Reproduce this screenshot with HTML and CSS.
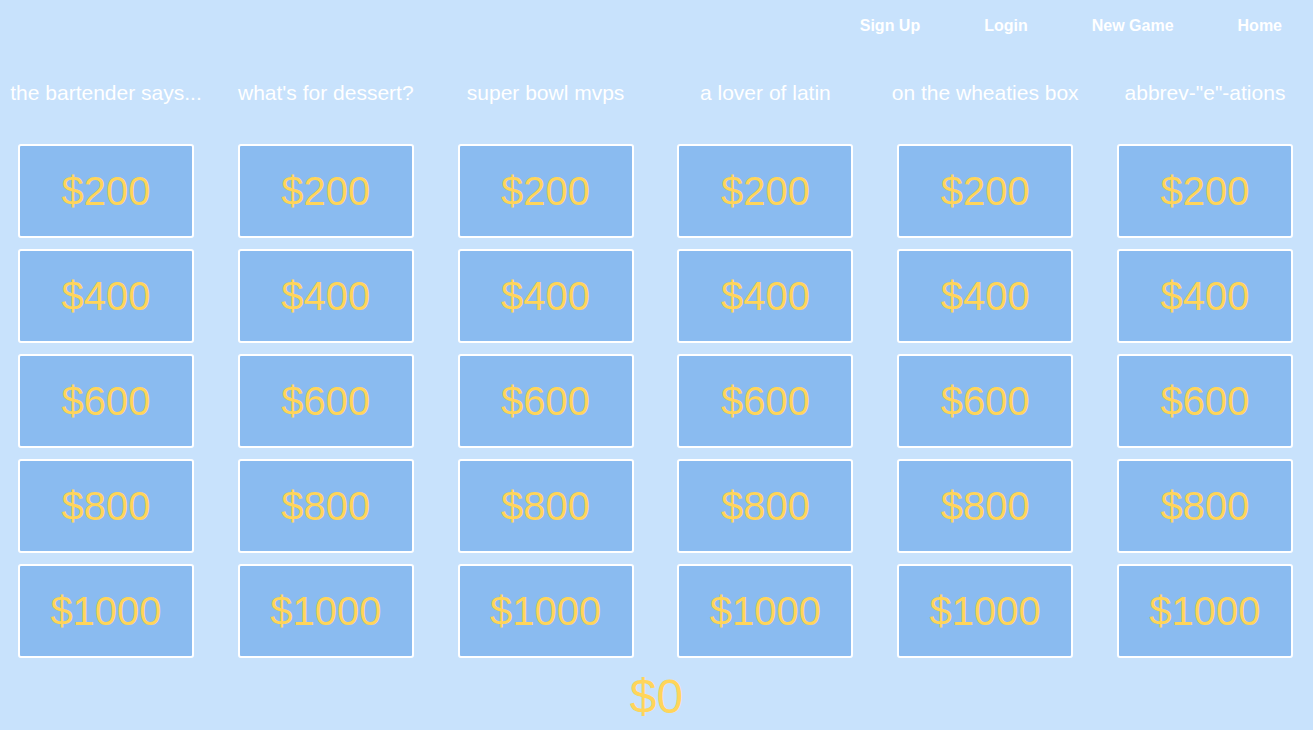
FILE: index.html
```html
<!DOCTYPE html>
<html lang="en">
<head>
<meta charset="utf-8">
<title>Jeopardy</title>
<link rel="stylesheet" href="styles.css">
</head>
<body>
<nav class="nav">
  <a class="nav-link" href="#">Sign Up</a>
  <a class="nav-link" href="#">Login</a>
  <a class="nav-link" href="#">New Game</a>
  <a class="nav-link" href="#">Home</a>
</nav>
<main class="board">
  <section class="category">
    <div class="cat-title"><span>the bartender says...</span></div>
    <div class="clue">$200</div><div class="clue">$400</div><div class="clue">$600</div><div class="clue">$800</div><div class="clue">$1000</div>
  </section>
  <section class="category">
    <div class="cat-title"><span>what's for dessert?</span></div>
    <div class="clue">$200</div><div class="clue">$400</div><div class="clue">$600</div><div class="clue">$800</div><div class="clue">$1000</div>
  </section>
  <section class="category">
    <div class="cat-title"><span>super bowl mvps</span></div>
    <div class="clue">$200</div><div class="clue">$400</div><div class="clue">$600</div><div class="clue">$800</div><div class="clue">$1000</div>
  </section>
  <section class="category">
    <div class="cat-title"><span>a lover of latin</span></div>
    <div class="clue">$200</div><div class="clue">$400</div><div class="clue">$600</div><div class="clue">$800</div><div class="clue">$1000</div>
  </section>
  <section class="category">
    <div class="cat-title"><span>on the wheaties box</span></div>
    <div class="clue">$200</div><div class="clue">$400</div><div class="clue">$600</div><div class="clue">$800</div><div class="clue">$1000</div>
  </section>
  <section class="category">
    <div class="cat-title"><span>abbrev-"e"-ations</span></div>
    <div class="clue">$200</div><div class="clue">$400</div><div class="clue">$600</div><div class="clue">$800</div><div class="clue">$1000</div>
  </section>
</main>
<div class="score">$0</div>
</body>
</html>
```
FILE: styles.css
```css
html, body {
  margin: 0;
  padding: 0;
}
body {
  background: #c8e2fc;
  font-family: "Liberation Sans", Arial, Helvetica, sans-serif;
  height: 730px;
  overflow: hidden;
}
.nav {
  display: flex;
  justify-content: flex-end;
  align-items: center;
  gap: 64px;
  height: 50px;
  padding-top: 1px;
  box-sizing: border-box;
  padding-right: 31px;
}
.nav-link {
  color: #ffffff;
  text-decoration: none;
  font-size: 16px;
  font-weight: bold;
  line-height: 20px;
}
.board {
  display: flex;
  column-gap: 43.8px;
  padding-left: 18px;
}
.category {
  display: flex;
  flex-direction: column;
  width: 176px;
  row-gap: 11px;
}
.cat-title {
  display: flex;
  justify-content: center;
  white-space: nowrap;
  color: #ffffff;
  font-size: 21px;
  line-height: 24px;
  height: 24px;
  margin-top: 31px;
  margin-bottom: 28px;
}
.clue {
  box-sizing: border-box;
  height: 94px;
  border: 2px solid #ffffff;
  border-radius: 3px;
  background: #8abbf0;
  color: #ffd55a;
  font-size: 40px;
  display: flex;
  align-items: center;
  justify-content: center;
}
.score {
  margin-top: 11px;
  text-align: center;
  color: #ffd55a;
  font-size: 48px;
  line-height: 56px;
}
```
